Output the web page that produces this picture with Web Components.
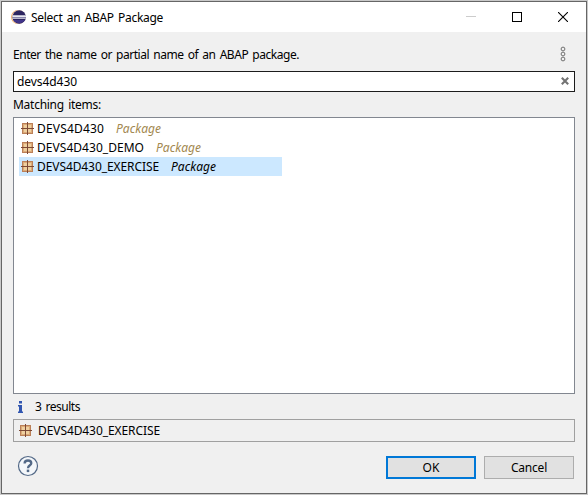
<!DOCTYPE html>
<html lang="en"><head><meta charset="utf-8"><title>Select an ABAP Package</title>
<style>html,body{margin:0;height:100%;overflow:hidden;background:#c8c8c8}</style></head>
<body>
<package-dialog></package-dialog>
<script>
const define=(name,html,extra)=>customElements.define(name,class extends HTMLElement{
  constructor(){super();this.attachShadow({mode:'open'}).innerHTML=html;}
  connectedCallback(){if(extra)extra(this);}
});

/* Single-line label; its spacing is adjusted so the text spans w pixels */
define('ui-label',`<style>:host{display:inline-block;white-space:nowrap;line-height:19px;flex:none;word-spacing:1.500px}span{display:inline-block}</style><span><slot></slot></span>`,el=>{
  const w=+el.getAttribute('w'),s=el.shadowRoot.querySelector('span');
  const n=s.getBoundingClientRect().width,len=el.textContent.length;
  if(w&&n&&len)s.style.letterSpacing=((w-n)/len)+'px';
  if(w)el.style.width=w+'px';
});

define('package-icon',`<style>:host{display:block;width:14px;height:14px;flex:none}svg{display:block}</style>
<svg width="14" height="14" viewBox="0 0 14 14"><rect x="1" y="1" width="11" height="11" fill="#bb8058"/><path d="M2 2h4v4H2zM7 2h4v4H7zM2 7h4v4H2zM7 7h4v4H7z" fill="#dcab79"/><path d="M3 3h3v3H3zM7 3h3v3H7zM3 7h3v3H3zM7 7h3v3H7z" fill="#efd09f"/><path d="M6.500 0v13M0 6.500h13" stroke="#7c4935"/></svg>`);

define('eclipse-icon',`<style>:host{display:block;width:16px;height:16px;flex:none}svg{display:block}</style>
<svg width="16" height="16" viewBox="0 0 16 16"><circle cx="7" cy="8" r="6.900" fill="#ef9b4b"/><circle cx="7.700" cy="8" r="6.900" fill="#f7dfc8"/><circle cx="8.200" cy="8" r="6.700" fill="#2c2560"/><path d="M2.500 11h11.400A6.700 6.700 0 0 1 2.500 11z" fill="#41358a"/><path d="M1.500 6h13.400v1H1.500zM1.500 9h13.400v1H1.500z" fill="#b9b7cc"/><path d="M1.500 7h13.500v1H1.500z" fill="#e9e9f1"/><path d="M1.500 8h13.500v1H1.500z" fill="#8a86ad"/></svg>`);

define('title-bar',`<style>:host{display:flex;height:30px;background:#fff;align-items:center;padding-left:9px;color:#000}
.t{display:flex;margin-left:4px;margin-right:auto}.b{width:46px;height:30px;display:grid;place-items:center}svg{display:block}</style>
<eclipse-icon></eclipse-icon><div class="t"><slot></slot></div>
<div class="b"><svg width="10" height="10"><path d="M0 4.500h10" stroke="#ccc"/></svg></div>
<div class="b"><svg width="10" height="10"><rect x=".5" y=".5" width="9" height="9" fill="none" stroke="#000"/></svg></div>
<div class="b"><svg width="10" height="10"><path d="M0 0l10 10M10 0L0 10" stroke="#000" stroke-width="1.100"/></svg></div>`);

define('search-field',`<style>:host{display:flex;box-sizing:border-box;height:21px;border:1px solid #1c1c1c;background:#fff;align-items:center;justify-content:space-between;padding:0 5px 0 3px}svg{display:block;margin-bottom:1px}</style>
<slot></slot><svg width="8" height="8"><path d="M.8.8l6.400 6.400M7.200.8L.8 7.200" stroke="#737373" stroke-width="2.100"/></svg>`);

define('package-row',`<style>:host{display:flex;width:263px;height:19px;box-sizing:border-box;align-items:center;padding-left:2px;color:#000;--kind:#a2884f}
:host([selected]){background:#cce8ff;--kind:#000}.n{margin-left:2px;display:flex}.k{margin-left:12px;display:flex;font-style:italic;color:var(--kind)}</style>
<package-icon></package-icon><div class="n"><slot></slot></div><div class="k"><slot name="kind"></slot></div>`);

define('result-list',`<style>:host{display:block;box-sizing:border-box;height:277px;border:1px solid #828790;background:#fff;padding:1px 5px}</style><slot></slot>`);

define('push-button',`<style>:host{display:flex;box-sizing:border-box;width:90px;height:23px;border:1px solid #adadad;background:#e1e1e1;align-items:center;justify-content:center}:host([primary]){border:2px solid #0078d7}</style><slot></slot>`);

define('package-dialog',`<style>
:host{display:block;box-sizing:border-box;width:588px;height:495px;padding:1px;background:#c9c9c9;font:12px "Noto Sans","Open Sans",sans-serif;color:#000}
.win{box-sizing:border-box;width:586px;height:493px;border:1px solid #666;background:#f0f0f0}
.body{padding:12px 11px 0}
.row{display:flex;align-items:center}.head{height:20px;justify-content:space-between;padding:0 9px 0 0;margin-bottom:7px}
.m{height:19px;margin:3px 0 3px}.info{height:25px;padding-left:5px}
.current{box-sizing:border-box;height:23px;border:1px solid #a0a0a0;padding-left:5px}
.foot{height:23px;margin-top:14px;gap:8px;padding:0 1px 0 4px}.foot svg{margin-right:auto;margin-bottom:3px}
svg{display:block;flex:none}
</style>
<div class="win"><title-bar><ui-label w="132">Select an ABAP Package</ui-label></title-bar><div class="body">
<div class="row head"><ui-label w="286">Enter the name or partial name of an ABAP package.</ui-label>
<svg width="6" height="16" viewBox="0 0 6 16" fill="none" stroke="#707070"><circle cx="3" cy="3" r="1.900"/><circle cx="3" cy="8" r="1.900"/><circle cx="3" cy="13" r="1.900"/></svg></div>
<search-field><ui-label w="60">devs4d430</ui-label></search-field>
<div class="row m"><ui-label w="88">Matching items:</ui-label></div>
<result-list>
<package-row><ui-label w="67">DEVS4D430</ui-label><ui-label slot="kind" w="45">Package</ui-label></package-row>
<package-row><ui-label w="107">DEVS4D430_DEMO</ui-label><ui-label slot="kind" w="45">Package</ui-label></package-row>
<package-row selected><ui-label w="122">DEVS4D430_EXERCISE</ui-label><ui-label slot="kind" w="45">Package</ui-label></package-row>
</result-list>
<div class="row info"><svg width="6" height="12" viewBox="0 0 6 12" fill="#3156b0"><path d="M1 0h3v2.500H1zM0 4h4v6.500h1V12H0v-1.500h1V5.500H0z"/></svg><ui-label w="45" style="margin-left:11px">3 results</ui-label></div>
<div class="row current"><package-icon></package-icon><ui-label w="122" style="margin-left:5px">DEVS4D430_EXERCISE</ui-label></div>
<div class="row foot"><svg width="22" height="22" viewBox="0 0 22 22" fill="none" stroke="#536987"><circle cx="11" cy="11" r="9.500" fill="#f4f7fa" stroke-width="1.200"/><path d="M7.600 8.500C7.600 6.300 9 5.500 11 5.500S14.300 6.500 14.300 8.300C14.300 10.300 11 10.300 11 13.200" stroke-width="2.300"/><path d="M11 14.600v2.500" stroke-width="2.500"/></svg>
<push-button primary><ui-label w="17">OK</ui-label></push-button><push-button><ui-label w="36">Cancel</ui-label></push-button></div>
</div></div>`);
</script>
</body></html>
